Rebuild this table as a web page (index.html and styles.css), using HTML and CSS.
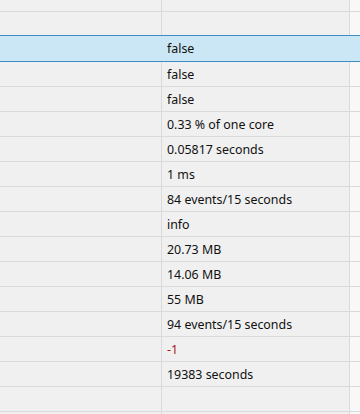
FILE: index.html
```html
<!DOCTYPE html>
<html>
<head>
<meta charset="utf-8">
<link rel="stylesheet" href="styles.css">
</head>
<body>
<div class="grid">
  <div class="row top"><div class="c1"></div><div class="c2"></div><div class="c3"></div></div>
  <div class="row second"><div class="c1"></div><div class="c2"></div><div class="c3"></div></div>
  <div class="row sel"><div class="c1"></div><div class="c2">false</div><div class="c3"></div></div>
  <div class="row"><div class="c1"></div><div class="c2">false</div><div class="c3"></div></div>
  <div class="row"><div class="c1"></div><div class="c2">false</div><div class="c3"></div></div>
  <div class="row"><div class="c1"></div><div class="c2">0.33 % of one core</div><div class="c3"></div></div>
  <div class="row"><div class="c1"></div><div class="c2">0.05817 seconds</div><div class="c3"></div></div>
  <div class="row"><div class="c1"></div><div class="c2">1 ms</div><div class="c3"></div></div>
  <div class="row"><div class="c1"></div><div class="c2">84 events/15 seconds</div><div class="c3"></div></div>
  <div class="row"><div class="c1"></div><div class="c2">info</div><div class="c3"></div></div>
  <div class="row"><div class="c1"></div><div class="c2">20.73 MB</div><div class="c3"></div></div>
  <div class="row"><div class="c1"></div><div class="c2">14.06 MB</div><div class="c3"></div></div>
  <div class="row"><div class="c1"></div><div class="c2">55 MB</div><div class="c3"></div></div>
  <div class="row"><div class="c1"></div><div class="c2">94 events/15 seconds</div><div class="c3"></div></div>
  <div class="row"><div class="c1"></div><div class="c2 neg">-1</div><div class="c3"></div></div>
  <div class="row"><div class="c1"></div><div class="c2">19383 seconds</div><div class="c3"></div></div>
  <div class="row"><div class="c1"></div><div class="c2"></div><div class="c3"></div></div>
  <div class="row"><div class="c1"></div><div class="c2"></div><div class="c3"></div></div>
</div>
</body>
</html>
```
FILE: styles.css
```css
html, body {
  margin: 0;
  padding: 0;
  background: #f0f0f0;
  overflow: hidden;
}
.grid {
  width: 360px;
  height: 414px;
  overflow: hidden;
  font-family: "Noto Sans", "Open Sans", sans-serif;
  font-size: 12.4px;
  color: #111111;
}
.row {
  display: flex;
  height: 24px;
  border-bottom: 1px solid #dadada;
}
.row.top {
  height: 11px;
}
.row.second {
  height: 23px;
  border-bottom: none;
}
.row.sel {
  height: 25px;
  background: #cbe7f5;
  border-top: 1px solid #3e8ec4;
  border-bottom: 1px solid #3e8ec4;
}
.c1 {
  width: 161px;
  border-right: 1px solid #dadada;
}
.c2 {
  width: 182px;
  padding-left: 5px;
  border-right: 1px solid #dadada;
  display: flex;
  align-items: center;
  white-space: nowrap;
}
.c3 {
  flex: 1;
  background: #f8f8f8;
}
.sel .c1, .sel .c2 {
  border-right-color: transparent;
}
.sel .c3 {
  background: #cbe7f5;
}
.neg {
  color: #a31515;
}
```
